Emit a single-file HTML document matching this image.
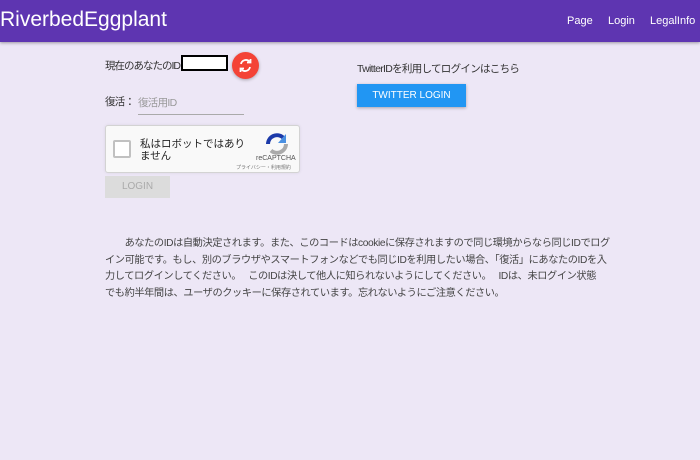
<!DOCTYPE html>
<html><head><meta charset="utf-8"><style>
*{margin:0;padding:0;box-sizing:border-box}
body{width:700px;height:460px;background:#ede7f6;font-family:"Liberation Sans","Noto Sans CJK JP",sans-serif;color:#333;position:relative;overflow:hidden}
.hdr{position:absolute;left:0;top:0;width:700px;height:42px;background:#5e35b1;box-shadow:0 1px 3px rgba(0,0,0,.35)}
.logo{position:absolute;left:0;top:8px;font-size:21px;color:#fff}
.nav{position:absolute;top:15px;font-size:11px;color:#fff}
.a{position:absolute;font-size:10.5px;white-space:nowrap;letter-spacing:-0.7px}
</style></head><body>
<div class="hdr"><div class="logo">RiverbedEggplant</div>
<div class="nav" style="left:567px">Page</div><div class="nav" style="left:608px">Login</div><div class="nav" style="left:650px">LegalInfo</div></div>
<div class="a" style="left:105px;top:58px;letter-spacing:-1px">現在のあなたのID</div>
<div style="position:absolute;left:181px;top:55px;width:47px;height:16px;border:2px solid #000;background:#fff"></div>
<div style="position:absolute;left:232px;top:52px;width:27px;height:27px;border-radius:50%;background:#f44336;box-shadow:0 1px 3px rgba(0,0,0,.3)">
<svg width="27" height="27" viewBox="0 0 27 27"><path d="M9 12a5 5 0 0 1 8.5-2.5M18 15a5 5 0 0 1-8.5 2.5" stroke="#fff" stroke-width="1.8" fill="none"/><path d="M18.5 7v3.5H15M8.5 20v-3.5H12" stroke="#fff" stroke-width="1.8" fill="none"/></svg></div>
<div class="a" style="left:105px;top:94px">復活：</div>
<div class="a" style="left:138px;top:95px;color:#999">復活用ID</div>
<div style="position:absolute;left:138px;top:114px;width:106px;height:1px;background:#aaa"></div>
<div style="position:absolute;left:105px;top:125px;width:195px;height:48px;background:#f9f9f9;border:1px solid #d3d3d3;border-radius:3px;box-shadow:0 0 3px rgba(0,0,0,.08)">
<div style="position:absolute;left:7px;top:14px;width:18px;height:18px;border:2px solid #c1c1c1;border-radius:2px;background:#fff"></div>
<div style="position:absolute;left:34px;top:12px;font-size:10.5px;line-height:12px;color:#222">私はロボットではあり<br>ません</div>
<svg style="position:absolute;left:158px;top:6px" width="26" height="24" viewBox="0 0 26 24"><path d="M4 12a9 9 0 0 1 15-6.5" stroke="#1c3aa9" stroke-width="4" fill="none"/><path d="M22 12a9 9 0 0 1-15 6.5" stroke="#aaa" stroke-width="4" fill="none"/><path d="M22 2v9h-8z" fill="#4a90e2"/></svg>
<div style="position:absolute;left:150px;top:29px;font-size:7px;color:#555">reCAPTCHA</div>
<div style="position:absolute;left:130px;top:38px;font-size:5px;color:#777">プライバシー・利用規約</div></div>
<div style="position:absolute;left:105px;top:176px;width:65px;height:22px;background:#dcdcdc;color:#aaa;font-size:10px;text-align:center;line-height:22px">LOGIN</div>
<div class="a" style="left:357px;top:61px">TwitterIDを利用してログインはこちら</div>
<div style="position:absolute;left:357px;top:84px;width:109px;height:23px;background:#2196f3;color:#fff;font-size:10px;text-align:center;line-height:23px;box-shadow:0 1px 3px rgba(0,0,0,.3)">TWITTER LOGIN</div>
<div class="a" style="left:105px;top:236px;font-size:10.2px;letter-spacing:-0.4px;line-height:16.7px;color:#444">　　あなたのIDは自動決定されます。また、このコードはcookieに保存されますので同じ環境からなら同じIDでログ<br>イン可能です。もし、別のブラウザやスマートフォンなどでも同じIDを利用したい場合、「復活」にあなたのIDを入<br>力してログインしてください。　 このIDは決して他人に知られないようにしてください。　 IDは、未ログイン状態<br>でも約半年間は、ユーザのクッキーに保存されています。忘れないようにご注意ください。</div>
</body></html>
